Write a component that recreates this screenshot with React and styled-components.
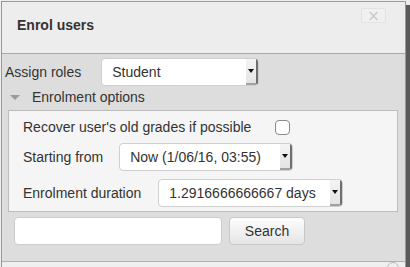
import styled, { createGlobalStyle } from "styled-components";

const Global = createGlobalStyle`
  html, body {
    margin: 0;
    padding: 0;
    background: #ededed;
    font-family: "Liberation Sans", Arial, sans-serif;
    font-size: 14px;
    color: #333;
  }
`;

const Dialog = styled.div`
  margin: 1px 0 0 1px;
  width: 403px;
  border: 1px solid #9a9a9a;
  box-shadow: 4px 4px 0 #5a5a5a;
  background: #ededed;
`;

const Header = styled.div`
  position: relative;
  height: 51px;
  display: flex;
  align-items: center;
  padding-left: 15px;
  border-bottom: 1px solid #a8a8a8;
`;

const Title = styled.h3`
  margin: 0 0 6px 0;
  font-size: 14px;
  font-weight: bold;
  color: #333;
`;

const Close = styled.button`
  position: absolute;
  top: 6px;
  right: 19px;
  width: 25px;
  height: 15px;
  padding: 0;
  border: 1px solid #e2e2e2;
  border-radius: 2px;
  background: #f0f0f0;
  color: #c8c8c8;
  font-size: 15px;
  line-height: 12px;
  font-family: "DejaVu Sans", sans-serif;
`;

const Body = styled.div`
  background: #dddddd;
  padding: 4px 7px 16px 3px;
  border-bottom: 1px solid #b0b0b0;
`;

const Row = styled.div`
  display: flex;
  align-items: center;
  gap: ${(p) => p.$gap || 20}px;
  height: ${(p) => p.$h || 28}px;
  margin-top: ${(p) => p.$mt || 0}px;
`;

const Label = styled.span`
  font-size: 14px;
  color: #333;
  white-space: nowrap;
`;

const Select = styled.div`
  display: flex;
  align-items: stretch;
  width: ${(p) => p.$w}px;
  height: 28px;
  box-sizing: border-box;
  border: 1px solid #cfcfcf;
  border-radius: 4px;
  background: #fff;
  overflow: hidden;
`;

const SelectText = styled.span`
  flex: 1;
  display: flex;
  align-items: center;
  padding-left: 10px;
  color: #333;
  white-space: nowrap;
`;

const Arrow = styled.span`
  width: 10px;
  display: flex;
  align-items: center;
  justify-content: center;
  background: linear-gradient(#f4f4f4, #e4e4e4);
  border-right: 2px solid #6f6f6f;
  border-bottom: 2px solid #a0a0a0;
  &::after {
    content: "";
    border-left: 3px solid transparent;
    border-right: 3px solid transparent;
    border-top: 4px solid #111;
  }
`;

const Legend = styled.div`
  display: flex;
  align-items: center;
  gap: 12px;
  height: 20px;
  margin: 1px 0 0 5px;
`;

const Triangle = styled.span`
  width: 0;
  height: 0;
  border-left: 5px solid transparent;
  border-right: 5px solid transparent;
  border-top: 5px solid #9a9a9a;
`;

const Fieldset = styled.div`
  margin: 3px 0 0 3px;
  border: 1px solid #bcbcbc;
  background: #f5f5f5;
  padding: 5px 0 4px 14px;
  box-sizing: border-box;
  width: 390px;
`;

const Checkbox = styled.span`
  width: 13px;
  height: 13px;
  border: 1px solid #8a8a8a;
  border-radius: 4px;
  background: #fff;
`;

const SearchRow = styled.div`
  display: flex;
  gap: 7px;
  margin: 5px 0 0 9px;
`;

const SearchInput = styled.div`
  width: 208px;
  height: 28px;
  box-sizing: border-box;
  border: 1px solid #ccc;
  border-radius: 4px;
  background: #fff;
`;

const Button = styled.button`
  width: 76px;
  height: 28px;
  border: 1px solid #c8c8c8;
  border-radius: 4px;
  background: linear-gradient(#fdfdfd, #e5e5e5);
  font-family: "Liberation Sans", Arial, sans-serif;
  font-size: 14px;
  color: #333;
  padding: 0;
`;

const Footer = styled.div`
  position: relative;
  height: 5px;
  background: #efefef;
`;

const Knob = styled.span`
  position: absolute;
  right: 6px;
  top: 0px;
  width: 10px;
  height: 10px;
  border: 1px solid #bbb;
  border-radius: 50%;
`;

const App = () => {
  return (
    <>
      <Global />
      <Dialog>
        <Header>
          <Title>Enrol users</Title>
          <Close>×</Close>
        </Header>
        <Body>
          <Row $gap={20}>
            <Label>Assign roles</Label>
            <Select $w={158}>
              <SelectText>Student</SelectText>
              <Arrow />
            </Select>
          </Row>
          <Legend>
            <Triangle />
            <Label>Enrolment options</Label>
          </Legend>
          <Fieldset>
            <Row $gap={24} $h={22}>
              <Label>Recover user's old grades if possible</Label>
              <Checkbox />
            </Row>
            <Row $gap={16} $h={29} $mt={4}>
              <Label>Starting from</Label>
              <Select $w={174}>
                <SelectText>Now (1/06/16, 03:55)</SelectText>
                <Arrow />
              </Select>
            </Row>
            <Row $gap={17} $h={29} $mt={7}>
              <Label>Enrolment duration</Label>
              <Select $w={185}>
                <SelectText>1.2916666666667 days</SelectText>
                <Arrow />
              </Select>
            </Row>
          </Fieldset>
          <SearchRow>
            <SearchInput />
            <Button>Search</Button>
          </SearchRow>
        </Body>
        <Footer>
          <Knob />
        </Footer>
      </Dialog>
    </>
  );
};

export default App;
